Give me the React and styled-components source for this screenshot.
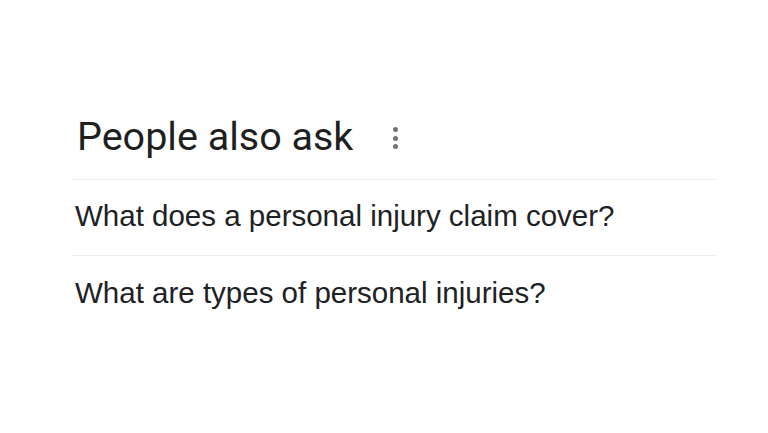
import React from "react";
import styled, { createGlobalStyle } from "styled-components";

const GlobalStyle = createGlobalStyle`
  html, body {
    margin: 0;
    padding: 0;
    background: #ffffff;
  }
  body {
    width: 768px;
    height: 433px;
    overflow: hidden;
  }
`;

const Page = styled.div`
  padding: 113px 51px 0 72px;
`;

const Header = styled.div`
  display: flex;
  align-items: center;
  gap: 40px;
  padding: 0 0 18px 5px;
  border-bottom: 1px solid #ececec;
`;

const Title = styled.h2`
  margin: 0;
  font-family: Roboto, "Liberation Sans", sans-serif;
  font-weight: 400;
  font-size: 39.5px;
  line-height: 48px;
  color: #1f1f1f;
`;

const MoreButton = styled.div`
  display: flex;
  flex-direction: column;
  align-items: center;
  gap: 3.5px;
  margin-top: 2px;
`;

const Dot = styled.span`
  width: 5px;
  height: 5px;
  border-radius: 50%;
  background: #6f7378;
`;

const Question = styled.div`
  box-sizing: border-box;
  display: flex;
  align-items: center;
  height: 76px;
  padding: 0 0 3px 3px;
  font-family: "Liberation Sans", Arial, sans-serif;
  font-size: 29.5px;
  color: #202124;
  border-bottom: ${(p) => (p.last ? "none" : "1px solid #ececec")};
`;

const questions = [
  "What does a personal injury claim cover?",
  "What are types of personal injuries?",
];

export default function App() {
  return (
    <>
      <GlobalStyle />
      <Page>
        <Header>
          <Title>People also ask</Title>
          <MoreButton>
            <Dot />
            <Dot />
            <Dot />
          </MoreButton>
        </Header>
        {questions.map((q, i) => (
          <Question key={i} last={i === questions.length - 1}>
            {q}
          </Question>
        ))}
      </Page>
    </>
  );
}
